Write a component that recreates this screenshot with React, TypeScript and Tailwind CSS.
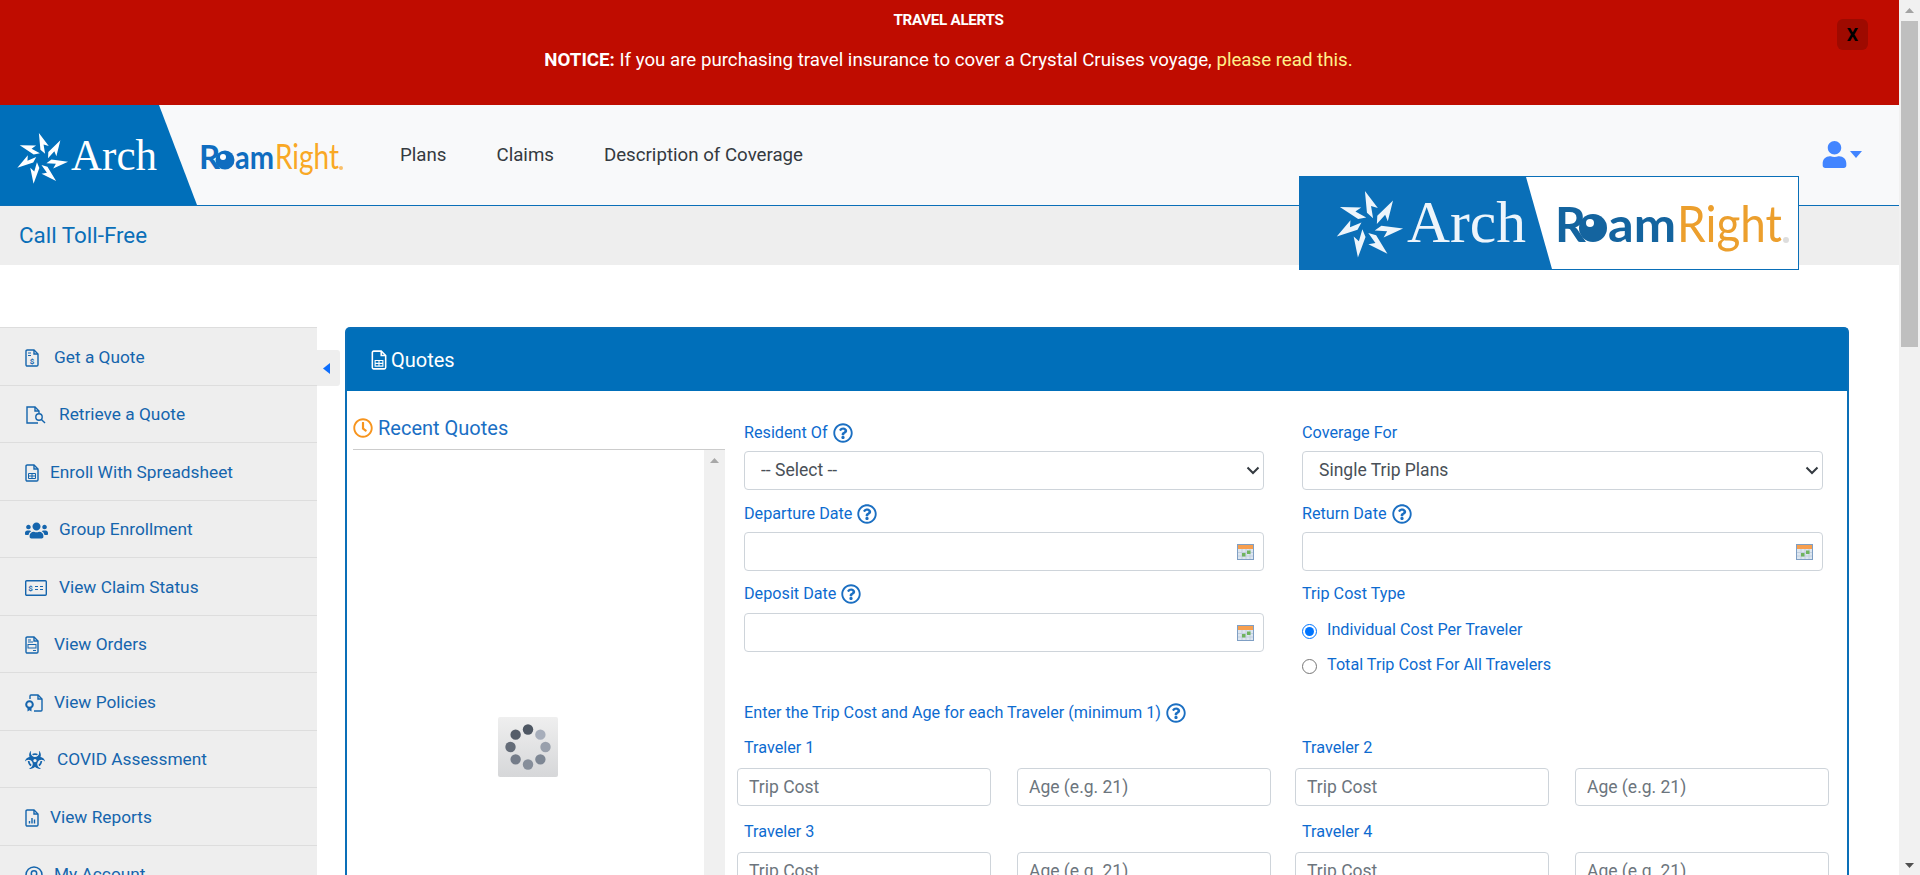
import { FaUser, FaUsers, FaBiohazard, FaRegClock, FaRegQuestionCircle } from 'react-icons/fa';
import { ReactNode } from 'react';

const font = "font-['Roboto',sans-serif]";

// seven swept arrow blades, as in the Arch mark
function Star({ cx, cy, r, fill = 'white' }: { cx: number; cy: number; r: number; fill?: string }) {
  const k = r / 25;
  return (
    <g transform={`translate(${cx} ${cy}) scale(${k})`} fill={fill}>
      {[0, 51.4, 102.8, 154.3, 205.7, 257.1, 308.6].map((a) => (
        <path key={a} transform={`rotate(${a})`} d="M-3 -25 L6.5 -12.5 L1.5 -14 L3 -5 L-1.5 -9 Z" />
      ))}
    </g>
  );
}

function TopLogo() {
  return (
    <svg width="350" height="100" viewBox="0 0 350 100" className="shrink-0">
      <polygon points="0,0 159,0 197,100 0,100" fill="#006fba" />
      <Star cx={42} cy={54} r={26} />
      <text x="71" y="65" fontFamily="Liberation Serif" fontSize="44" fill="white" textLength="86" lengthAdjust="spacingAndGlyphs">Arch</text>
      <text x="199" y="64" fontFamily="Lato" fontWeight="700" fontSize="33" fill="#0f6dc0">R</text>
      <circle cx="225" cy="55" r="9.5" fill="#0f6dc0" />
      <circle cx="223" cy="52" r="3" fill="white" />
      <text x="235" y="64" fontFamily="Lato" fontWeight="700" fontSize="33" fill="#0f6dc0" textLength="39" lengthAdjust="spacingAndGlyphs">am</text>
      <text x="275" y="64" fontFamily="Lato" fontSize="35" fill="#f9a825" textLength="64" lengthAdjust="spacingAndGlyphs">Right</text>
      <circle cx="341" cy="63" r="2" fill="#f9c069" />
    </svg>
  );
}

function BigLogo() {
  return (
    <svg width="498" height="92" viewBox="0 0 498 92" className="blur-[0.4px]">
      <rect width="498" height="92" fill="white" />
      <polygon points="0,0 226,0 252,92 0,92" fill="#0a6fb8" />
      <Star cx={69} cy={48} r={34} fill="#eef5fb" />
      <text x="107" y="65" fontFamily="Liberation Serif" fontSize="60" fill="#eef5fb" textLength="119" lengthAdjust="spacingAndGlyphs">Arch</text>
      <text x="255" y="65" fontFamily="Lato" fontWeight="700" fontSize="48" fill="#14649f">R</text>
      <circle cx="293" cy="51" r="14" fill="#14649f" />
      <circle cx="290" cy="46" r="4" fill="white" />
      <text x="308" y="65" fontFamily="Lato" fontWeight="700" fontSize="48" fill="#14649f" textLength="68" lengthAdjust="spacingAndGlyphs">am</text>
      <text x="377" y="65" fontFamily="Lato" fontSize="50" fill="#ec9f2d" textLength="105" lengthAdjust="spacingAndGlyphs">Right</text>
      <circle cx="486" cy="63" r="3" fill="#ddd" />
    </svg>
  );
}

function FileIcon({ children, w = 14, h = 18, color = 'currentColor' }: { children?: ReactNode; w?: number; h?: number; color?: string }) {
  return (
    <svg width={w} height={h} viewBox="0 0 14 18" fill="none" stroke={color} strokeWidth="1.4" className="shrink-0">
      <path d="M1 2.2C1 1.5 1.5 1 2.2 1H9L13 5V15.8C13 16.5 12.5 17 11.8 17H2.2C1.5 17 1 16.5 1 15.8Z" />
      <path d="M9 1V5H13" />
      {children}
    </svg>
  );
}

const sidebarItems: { label: string; icon: ReactNode; gap: string }[] = [
  {
    label: 'Get a Quote',
    gap: 'ml-[15px]',
    icon: (
      <FileIcon>
        <path d="M3 4H6M3 6.5H6" strokeWidth="1" />
        <text x="7" y="14.5" fontSize="8" fontWeight="700" textAnchor="middle" fill="currentColor" stroke="none">$</text>
      </FileIcon>
    ),
  },
  {
    label: 'Retrieve a Quote',
    gap: 'ml-[13px]',
    icon: (
      <svg width="21" height="18" viewBox="0 0 21 18" fill="none" stroke="currentColor" strokeWidth="1.4" className="shrink-0">
        <path d="M13 17H2V1H10L14 5V7" />
        <path d="M10 1V5H14" />
        <circle cx="14" cy="11" r="3.2" />
        <path d="M16.4 13.4L20 17" />
      </svg>
    ),
  },
  {
    label: 'Enroll With Spreadsheet',
    gap: 'ml-[11px]',
    icon: (
      <FileIcon>
        <path d="M3.5 9.5H10.5V14.5H3.5ZM3.5 12H10.5M7 9.5V14.5" strokeWidth="1" />
      </FileIcon>
    ),
  },
  { label: 'Group Enrollment', gap: 'ml-[11px]', icon: <FaUsers size={23} className="shrink-0" /> },
  {
    label: 'View Claim Status',
    gap: 'ml-[12px]',
    icon: (
      <svg width="22" height="16" viewBox="0 0 22 16" fill="none" stroke="currentColor" strokeWidth="1.4" className="shrink-0">
        <rect x="0.7" y="0.7" width="20.6" height="14.6" rx="1" />
        <text x="5.5" y="11" fontSize="8" fontWeight="700" textAnchor="middle" fill="currentColor" stroke="none">$</text>
        <path d="M10 6.5H13M15 6.5H18M10 9.5H13M15 9.5H18" strokeWidth="1" />
      </svg>
    ),
  },
  {
    label: 'View Orders',
    gap: 'ml-[15px]',
    icon: (
      <FileIcon>
        <path d="M3 4H6M3 6H8" strokeWidth="1" />
        <rect x="3" y="8.5" width="8" height="3.5" strokeWidth="1" />
        <path d="M8 14.5H11" strokeWidth="1" />
      </FileIcon>
    ),
  },
  {
    label: 'View Policies',
    gap: 'ml-[11px]',
    icon: (
      <svg width="18" height="18" viewBox="0 0 18 18" fill="none" stroke="currentColor" strokeWidth="1.4" className="shrink-0">
        <path d="M5 5V2C5 1.4 5.4 1 6 1H13L17 5V16C17 16.6 16.6 17 16 17H9" />
        <path d="M13 1V5H17" />
        <circle cx="4.5" cy="10.5" r="3.3" strokeWidth="2" />
        <path d="M2.5 13.5V17.5L4.5 16.2L6.5 17.5V13.5" fill="currentColor" stroke="none" />
      </svg>
    ),
  },
  { label: 'COVID Assessment', gap: 'ml-[12px]', icon: <FaBiohazard size={20} className="shrink-0" /> },
  {
    label: 'View Reports',
    gap: 'ml-[11px]',
    icon: (
      <FileIcon>
        <path d="M4.5 14.5V12M7 14.5V9M9.5 14.5V10.5" strokeWidth="1.4" />
      </FileIcon>
    ),
  },
  {
    label: 'My Account',
    gap: 'ml-[11px]',
    icon: (
      <svg width="18" height="18" viewBox="0 0 18 18" fill="none" stroke="currentColor" strokeWidth="1.5" className="shrink-0">
        <circle cx="9" cy="9" r="8" />
        <circle cx="9" cy="7.5" r="2.7" />
        <path d="M4 14.5C5 12.5 7 12 9 12S13 12.5 14 14.5" />
      </svg>
    ),
  },
];

function Calendar() {
  return (
    <svg width="17" height="16" viewBox="0 0 17 16" className="absolute right-[10px] top-1/2 -translate-y-1/2">
      <rect x="0.5" y="0.5" width="16" height="15" fill="#dde6f0" stroke="#7f9fc4" />
      <rect x="1" y="1" width="15" height="4" fill="#f79f4f" />
      <path d="M1 8.5H16M1 12H16M5 5V15M9 5V15M13 5V15" stroke="#c3d0de" strokeWidth="1" />
      <rect x="5" y="9" width="3.5" height="3.5" fill="#6fb35f" />
      <rect x="10" y="6.5" width="3.5" height="3.5" fill="#6fb35f" />
    </svg>
  );
}

function Help() {
  return <FaRegQuestionCircle size={20} className="text-[#1b6fc2] shrink-0" />;
}

const labelCls = 'flex items-center gap-[5px] text-[16.2px] leading-[20px] text-[#0d6bd0]';
const inputCls =
  'h-[39px] w-full rounded-[4px] border border-[#ced4da] bg-white px-[16px] text-[17.5px] text-[#495057] outline-none';
const costCls =
  'h-[38px] w-[254px] rounded-[4px] border border-[#ced4da] bg-white px-[11px] text-[17.5px] text-[#495057] outline-none placeholder:text-[#6c757d]';

function SelectField({ value }: { value: string }) {
  return (
    <div className="relative mt-[8px]">
      <select className="h-[39px] w-full appearance-none rounded-[4px] border border-[#ced4da] bg-white pl-[16px] text-[17.5px] text-[#495057]">
        <option>{value}</option>
      </select>
      <svg width="14" height="9" viewBox="0 0 14 9" fill="none" stroke="#343a40" strokeWidth="2" className="absolute right-[4px] top-[15px]">
        <path d="M1.5 1.5L7 7L12.5 1.5" />
      </svg>
    </div>
  );
}

function DateField({ label, gap = 'mt-[8px]' }: { label: string; gap?: string }) {
  return (
    <div className="w-full">
      <div className={labelCls}>
        {label} <Help />
      </div>
      <div className={`relative ${gap}`}>
        <input className={inputCls} />
        <Calendar />
      </div>
    </div>
  );
}

function TravelerRow({ a, b }: { a: number; b: number }) {
  return (
    <div className="flex">
      {[a, b].map((n, i) => (
        <div key={n} className={i === 1 ? 'ml-[24px]' : ''}>
          <div className="ml-[7px] text-[16.2px] leading-[20px] text-[#0d6bd0]">Traveler {n}</div>
          <div className="mt-[10px] flex gap-[26px]">
            <input placeholder="Trip Cost" className={costCls} />
            <input placeholder="Age (e.g. 21)" className={costCls} />
          </div>
        </div>
      ))}
    </div>
  );
}

function Spinner() {
  const shades = ['#4e5763', '#a7aebb', '#99a0ac', '#7e8794', '#868e9a', '#747c89', '#646c78', '#555d69'];
  return (
    <div className="flex h-[60px] w-[60px] items-center justify-center rounded-[2px] bg-gradient-to-b from-[#efefef] to-[#d6d7d9]">
      <svg width="48" height="48" viewBox="-24 -24 48 48">
        {shades.map((c, i) => (
          <circle key={i} cx="0" cy="-17.5" r="5.2" fill={c} transform={`rotate(${i * 45})`} />
        ))}
      </svg>
    </div>
  );
}

export default function App() {
  return (
    <div className={`${font} flex h-[875px] overflow-hidden bg-white`}>
      <div className="relative min-w-0 flex-1">
        {/* alert banner */}
        <div className="relative h-[105px] bg-[#bf0c00] pr-[2px] text-center text-white">
          <div className="pt-[10px] text-[15.2px] font-bold leading-[20px] tracking-[-0.3px]">TRAVEL ALERTS</div>
          <div className="mt-[19px] text-[18.7px] leading-[22px]">
            <b>NOTICE:</b> If you are purchasing travel insurance to cover a Crystal Cruises voyage,{' '}
            <span className="text-[#fff08a]">please read this.</span>
          </div>
          <button className="absolute right-[31px] top-[19px] flex h-[31px] w-[31px] items-center justify-center rounded-[6px] bg-[#9e0a00] text-[18px] font-bold text-black">
            X
          </button>
        </div>

        {/* navbar */}
        <div className="flex h-[101px] items-start border-b border-[#0a6fb8] bg-[#f8f9fa]">
          <TopLogo />
          <div className="flex h-[100px] items-center gap-[50px] pl-[50px] text-[18.7px] text-[#343a40]">
            <span>Plans</span>
            <span>Claims</span>
            <span>Description of Coverage</span>
          </div>
          <div className="ml-auto mr-[37px] flex h-[100px] items-center gap-[2px] pb-[2px] text-[#4285ff]">
            <FaUser size={27} />
            <svg width="12" height="7" viewBox="0 0 12 7" fill="currentColor">
              <path d="M0 0H12L6 7Z" />
            </svg>
          </div>
        </div>

        {/* phone bar */}
        <div className="flex h-[59px] items-center bg-[#eeeeee] pl-[19px] text-[22.4px] text-[#0a6fb8]">Call Toll-Free</div>

        {/* logo overlay */}
        <div className="absolute left-[1299px] top-[176px] border border-[#0a6fb8] bg-white leading-[0]">
          <BigLogo />
        </div>

        <div className="mt-[62px] flex items-start">
          {/* sidebar */}
          <div className="w-[317px] shrink-0 bg-[#eeeeee] text-[17.3px] text-[#1565ad]">
            {sidebarItems.map((item) => (
              <div key={item.label} className="flex h-[57.5px] items-center border-t border-[#dddddd] pl-[25px] pt-[3px]">
                <span className="text-[#1565ad]">{item.icon}</span>
                <span className={item.gap}>{item.label}</span>
              </div>
            ))}
          </div>
          <div className="mt-[23px] flex h-[36px] w-[23px] shrink-0 items-center justify-center rounded-r-[3px] bg-[#eeeeee] pr-[4px]">
            <svg width="7" height="11" viewBox="0 0 7 11" fill="#0d6efd">
              <path d="M7 0V11L0 5.5Z" />
            </svg>
          </div>

          {/* quotes panel */}
          <div className="ml-[5px] w-[1504px] shrink-0 rounded-t-[5px] border-2 border-b-0 border-[#0a6fb8]">
            <div className="flex h-[62px] items-center gap-[4px] bg-[#006fba] pl-[24px] text-[20px] text-white">
              <FileIcon w={16} h={20} color="white">
                <path d="M3.5 9.5H10.5V14.5H3.5ZM3.5 12H10.5M7 9.5V14.5" strokeWidth="1" />
              </FileIcon>
              Quotes
            </div>
            <div className="flex">
              {/* recent quotes */}
              <div className="ml-[6px] w-[372px] shrink-0">
                <div className="flex h-[59px] items-center gap-[5px] border-b border-[#cccccc] pt-[15px] text-[20px] text-[#1a6fc4]">
                  <FaRegClock size={20} className="text-[#f7941d]" />
                  Recent Quotes
                </div>
                <div className="flex h-[500px]">
                  <div className="flex-1 pl-[145px] pt-[267px]">
                    <Spinner />
                  </div>
                  <div className="flex w-[21px] justify-center bg-[#f0f0f0] pt-[8px]">
                    <svg width="9" height="5" viewBox="0 0 9 5" fill="#a8a8a8">
                      <path d="M4.5 0L9 5H0Z" />
                    </svg>
                  </div>
                </div>
              </div>

              {/* form */}
              <div className="ml-[12px] pt-[32px]">
                <div className="ml-[7px]">
                  <div className="grid grid-cols-[520px_521px] gap-x-[38px]">
                    <div>
                      <div className={labelCls}>
                        Resident Of <Help />
                      </div>
                      <SelectField value="-- Select --" />
                    </div>
                    <div>
                      <div className={labelCls}>Coverage For</div>
                      <SelectField value="Single Trip Plans" />
                    </div>
                    <div className="mt-[14px]">
                      <DateField label="Departure Date" />
                    </div>
                    <div className="mt-[14px]">
                      <DateField label="Return Date" />
                    </div>
                    <div className="mt-[13px]">
                      <DateField label="Deposit Date" gap="mt-[9px]" />
                    </div>
                    <div className="mt-[13px]">
                      <div className={labelCls}>Trip Cost Type</div>
                      <label className="mt-[16px] flex items-start gap-[10px] text-[16.2px] leading-[20px] text-[#0d6bd0]">
                        <input type="radio" name="cost" defaultChecked className="m-0 mt-[4px] h-[15px] w-[15px]" />
                        Individual Cost Per Traveler
                      </label>
                      <label className="mt-[15px] flex items-start gap-[10px] text-[16.2px] leading-[20px] text-[#0d6bd0]">
                        <input type="radio" name="cost" className="m-0 mt-[4px] h-[15px] w-[15px]" />
                        Total Trip Cost For All Travelers
                      </label>
                    </div>
                  </div>
                  <div className={`${labelCls} mt-[28px]`}>
                    Enter the Trip Cost and Age for each Traveler (minimum 1) <Help />
                  </div>
                </div>
                <div className="mt-[15px]">
                  <TravelerRow a={1} b={2} />
                </div>
                <div className="mt-[16px]">
                  <TravelerRow a={3} b={4} />
                </div>
              </div>
            </div>
          </div>
        </div>
      </div>

      {/* page scrollbar */}
      <div className="flex h-[875px] w-[21px] shrink-0 flex-col items-center bg-[#f1f1f1]">
        <svg width="17" height="21" viewBox="0 0 17 21" fill="#a3a3a3">
          <path d="M8.5 8L13 13H4Z" />
        </svg>
        <div className="h-[326px] w-[17px] bg-[#bfbfbf]" />
        <svg width="17" height="21" viewBox="0 0 17 21" fill="#505050" className="mt-auto">
          <path d="M8.5 14L4 9H13Z" />
        </svg>
      </div>
    </div>
  );
}
